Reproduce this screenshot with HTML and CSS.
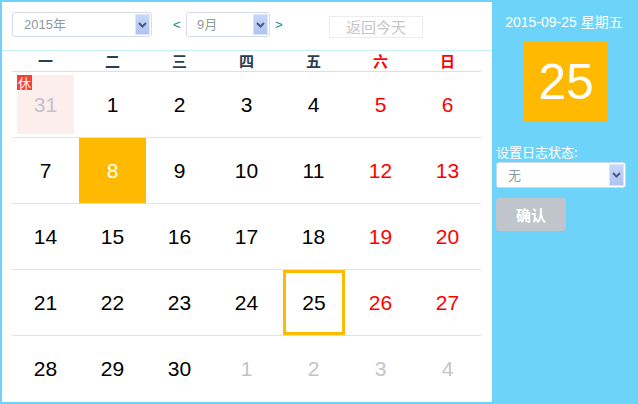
FILE: index.html
```html
<!DOCTYPE html>
<html lang="zh">
<head>
<meta charset="utf-8">
<title>日历</title>
<link rel="stylesheet" href="styles.css">
</head>
<body>
<div class="app">
  <div class="calendar">
    <div class="toolbar">
      <div class="select select-year">
        <span class="select-text">2015年</span>
        <span class="select-arrow"><svg width="9" height="6" viewBox="0 0 9 6"><path d="M1 1 L4.5 4.5 L8 1" fill="none" stroke="#4a5b80" stroke-width="2"/></svg></span>
      </div>
      <span class="nav nav-prev">&lt;</span>
      <div class="select select-month">
        <span class="select-text">9月</span>
        <span class="select-arrow"><svg width="9" height="6" viewBox="0 0 9 6"><path d="M1 1 L4.5 4.5 L8 1" fill="none" stroke="#4a5b80" stroke-width="2"/></svg></span>
      </div>
      <span class="nav nav-next">&gt;</span>
      <div class="today-btn">返回今天</div>
    </div>
    <div class="grid">
      <div class="weekdays">
        <span>一</span><span>二</span><span>三</span><span>四</span><span>五</span><span class="red">六</span><span class="red">日</span>
      </div>
      <div class="week">
        <div class="day other holiday"><span class="badge">休</span>31</div>
        <div class="day">1</div>
        <div class="day">2</div>
        <div class="day">3</div>
        <div class="day">4</div>
        <div class="day red">5</div>
        <div class="day red">6</div>
      </div>
      <div class="week">
        <div class="day">7</div>
        <div class="day selected">8</div>
        <div class="day">9</div>
        <div class="day">10</div>
        <div class="day">11</div>
        <div class="day red">12</div>
        <div class="day red">13</div>
      </div>
      <div class="week">
        <div class="day">14</div>
        <div class="day">15</div>
        <div class="day">16</div>
        <div class="day">17</div>
        <div class="day">18</div>
        <div class="day red">19</div>
        <div class="day red">20</div>
      </div>
      <div class="week">
        <div class="day">21</div>
        <div class="day">22</div>
        <div class="day">23</div>
        <div class="day">24</div>
        <div class="day today">25</div>
        <div class="day red">26</div>
        <div class="day red">27</div>
      </div>
      <div class="week">
        <div class="day">28</div>
        <div class="day">29</div>
        <div class="day">30</div>
        <div class="day other">1</div>
        <div class="day other">2</div>
        <div class="day other">3</div>
        <div class="day other">4</div>
      </div>
    </div>
  </div>
  <div class="side">
    <div class="side-date">2015-09-25 星期五</div>
    <div class="side-day">25</div>
    <div class="side-label">设置日志状态:</div>
    <div class="select select-status">
      <span class="select-text">无</span>
      <span class="select-arrow"><svg width="9" height="6" viewBox="0 0 9 6"><path d="M1 1 L4.5 4.5 L8 1" fill="none" stroke="#4a5b80" stroke-width="2"/></svg></span>
    </div>
    <div class="confirm">确认</div>
  </div>
</div>
</body>
</html>
```

FILE: styles.css
```css
html, body {
  margin: 0;
  padding: 0;
}
body {
  background: #6dd3f9;
  font-family: "Liberation Sans", "Noto Sans CJK SC", sans-serif;
  width: 638px;
  height: 404px;
  overflow: hidden;
}
.app {
  display: flex;
  padding: 2px 0 2px 2px;
  height: 400px;
}
.calendar {
  width: 490px;
  height: 400px;
  background: #fff;
  display: flex;
  flex-direction: column;
}
.toolbar {
  height: 49px;
  box-sizing: border-box;
  padding: 10px 10px 0 10px;
  display: flex;
  align-items: flex-start;
  border-bottom: 1px solid #c8f0f9;
}
.select {
  box-sizing: border-box;
  height: 25px;
  border: 1px solid #d5dde8;
  border-radius: 3px;
  background: #fff;
  display: flex;
  align-items: stretch;
  justify-content: space-between;
}
.select-text {
  font-family: "Liberation Sans", "Noto Sans CJK SC", sans-serif;
  font-size: 13px;
  color: #8e9a9c;
  line-height: 23px;
  padding-left: 11px;
}
.select-arrow {
  width: 15px;
  margin: 1px 1px 1px 0;
  background: linear-gradient(#c8d7fb, #aec2f3);
  border: 1px solid #dbe4fa;
  box-sizing: border-box;
  display: flex;
  align-items: center;
  justify-content: center;
}
.select-year {
  width: 140px;
}
.select-month {
  width: 84px;
}
.select-month .select-text {
  padding-left: 10px;
}
.nav {
  font-size: 13px;
  color: #0e8a8a;
  line-height: 25px;
  width: 13px;
}
.nav-prev {
  margin-left: 21px;
}
.nav-next {
  margin-left: 5px;
  width: 8px;
}
.today-btn {
  margin-left: 46px;
  margin-top: 4px;
  width: 94px;
  height: 22px;
  box-sizing: border-box;
  border: 1px solid #ececec;
  color: #c6c6c6;
  font-family: "Noto Sans CJK SC", sans-serif;
  font-size: 15px;
  line-height: 20px;
  text-align: center;
}
.grid {
  margin: 0 10px;
  width: 469px;
}
.weekdays {
  display: grid;
  grid-template-columns: repeat(7, 67px);
  height: 20px;
  border-bottom: 1px solid #e0e0e0;
}
.weekdays span {
  text-align: center;
  font-family: "Noto Sans CJK SC", sans-serif;
  font-weight: bold;
  font-size: 15px;
  line-height: 20px;
  color: #2c3e50;
}
.weekdays span.red {
  color: #f00;
}
.week {
  display: grid;
  grid-template-columns: repeat(7, 67px);
  height: 65px;
  border-top: 1px solid #e2e2e2;
}
.weekdays + .week {
  border-top: none;
}
.day {
  display: flex;
  align-items: center;
  justify-content: center;
  font-size: 21px;
  color: #000;
}
.day.red {
  color: #f00;
}
.day.other {
  color: #c4c4c8;
}
.day.holiday {
  margin: 3px 5px 3px 5px;
  background: #fdeeee;
  position: relative;
}
.badge {
  position: absolute;
  left: 0;
  top: 0;
  width: 15px;
  height: 15px;
  background: #f44336;
  color: #fff;
  font-family: "Noto Sans CJK SC", sans-serif;
  font-size: 13px;
  line-height: 15px;
  text-align: center;
}
.day.selected {
  background: #ffb900;
  color: #fff;
}
.day.today {
  margin: 0 2px 0 3px;
  border: 3px solid #ffb900;
}
.side {
  width: 146px;
  padding-left: 4px;
  box-sizing: border-box;
  display: flex;
  flex-direction: column;
  color: #fff;
}
.side-date {
  margin-top: 10px;
  font-size: 14px;
  line-height: 20px;
  text-align: center;
  padding-right: 6px;
  font-family: "Liberation Sans", "Noto Sans CJK SC", sans-serif;
}
.side-day {
  margin-top: 10px;
  margin-left: 28px;
  width: 84px;
  height: 80px;
  background: #ffb900;
  font-size: 50px;
  line-height: 80px;
  text-align: center;
}
.side-label {
  margin-top: 22px;
  font-family: "Noto Sans CJK SC", sans-serif;
  font-size: 13px;
  line-height: 16px;
}
.select-status {
  margin-top: 2px;
  width: 130px;
  height: 26px;
  border-color: #c9d8ec;
}
.select-status .select-text {
  font-family: "Noto Sans CJK SC", sans-serif;
  line-height: 24px;
}
.confirm {
  margin-top: 10px;
  width: 70px;
  height: 33px;
  border-radius: 3px;
  background: #c0c5cb;
  color: #fff;
  font-family: "Noto Sans CJK SC", sans-serif;
  font-weight: bold;
  font-size: 15px;
  line-height: 33px;
  text-align: center;
}
```
